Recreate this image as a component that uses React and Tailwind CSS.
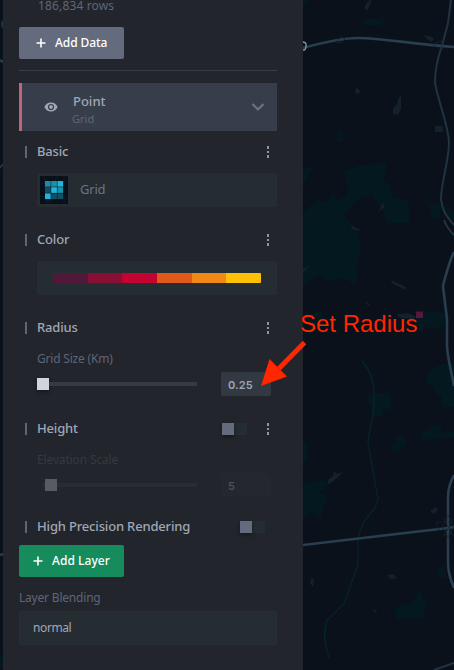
import React from "react";

function MapCanvas() {
  return (
    <svg className="absolute inset-0" width="454" height="670" viewBox="0 0 454 670">
      <rect width="454" height="670" fill="#0a111a" />
      <g fill="#04191f">
        <path d="M303 0h5l-5 7zM366 18l16 2V15h1v10h-21zM337 129l5 2 2 10h-7zM303 168h10l-10 17z" />
        <path d="M341 166l3 5 16-6 27-2-4 18 5 2 5 14 5 3-2-3 10 3 3 6v17h-22l-4-12-11-16-15 4-13 16 6 8h-15l-7-18 2-8 3-5 3 8 9-3 4-11zM303 220h45l10 13 3 13-4 17-1 7 2 5-3 10-13-8-12 5-12-7-8 6-9 8zM309 207l10-7 15 5 9 12 5 13-23 5-22-9v-12z" />
        <path d="M428 202l13 2-2 15-7-2zM444 205l10 7v8l-10-8zM402 220h7l-3 3zM310 315l12-6 1 15-14 12zM416 315l12-4 17 2v13l-10 2-10-1-4 4h-5z" />
        <path d="M427 372l16-8 11-2v45h-11l-2-12-6-1-2-8-7-2zM370 393h21v16h-8v7h-12v-11l-4-4zM421 432l8-2 6-6 6 3v7l13-3v6l-32 3zM396 437l8-2v6h-9zM392 443h5v-3h8v6l-6 1v4h-7z" />
        <path d="M303 443h4v15l-4 8zM303 485l17-5 11 3-13 10 9 3-6 21-11-5-7 6zM438 568l8-2v12h-6l-2-7zM396 608l7-4 8-1 5-5 3-8 4 5-1 5 5 3-1 5-3 3 1 7-28 1zM0 655h3v13H0z" />
      </g>
      <g fill="#14212b">
        <path d="M368 1l4-1-3 7-2 3h-2V6zM356 88l5 3-3 3-3-1zM398 99l3-4v14l-3 6-5-1v-6l4-4zM435 126h8v6h-8zM424 35l8 2 2 2-3 3-4-3zM381 205l3-2v5l-3 1-3 6z" />
        <path d="M351 225l9 5-1 1-7-2zM391 280l15 7-1 3-13-7zM365 301l5 4-2 1zM398 314l10-1 8 4-3 2-12-1-3-1zM303 269l7-4-7 8z" />
        <path d="M328 480l5-4 1-5 3 3 6-2-6 6-6 5-3 1zM431 510l5-3 2 3-4 4-3-2zM312 577l2 4-1 6-3-4zM387 575l6-1 4 4-6 1zM372 608l4 3 1 4z" />
      </g>
      <g fill="none" stroke="#05242a" strokeWidth="1.3">
        <path d="M362 361c9 10 13 23 12 38 1 18-4 23-6 43l6 35 4 22c-1 13-16 16-20 40v26l-14 39-17 16c-4 14-3 21 2 38" />
      </g>
      <g fill="none" stroke="#203341" strokeWidth="2">
        <path d="M451 0l-3 23-6 23c-5 13-7 25-7 37 4 21 13 42 14 59 0 19-8 41-8 57 1 10 4 16 13 26M444 220c2 6 5 10 10 15M434 670l20-7" />
        <path d="M3 21q-2 3 0 7M3 164l-3 4" />
      </g>
      <g fill="none" stroke="#293e4e" strokeWidth="2.6">
        <path d="M303 48c18-5 40-10 55-10 22 0 55 6 96 9M303 545l145-17 6-1" />
        <path d="M454 252c-4 8-8 22-11 34l4 33v26c0 10 3 20 7 41M454 475c-3 6-6 12-6 23v65c0 11 3 18 6 25" />
        <path d="M0 60l3 2M0 555l3-1" />
      </g>
      <g fill="none" stroke="#182530" strokeWidth="0.8">
        <path d="M336 42l5-5 4 2-4 4zM433 44l9-3v10zM448 515l-6 12 6 10 6-10zM442 522h-5v6l4 3M444 519l9 17M453 519l-9 17" />
      </g>
      <path d="M302 42q5 0 4 4 0 5-4 4" fill="none" stroke="#829fa9" strokeWidth="1.3" />
      <rect x="416" y="311.500" width="7" height="6.500" fill="#57173f" />
    </svg>
  );
}

function Dots() {
  return (
    <span className="flex w-[4px] flex-col items-center gap-[2px]">
      {[0, 1, 2].map((i) => (
        <span key={i} className="h-[2.5px] w-[2.5px] bg-[#8f95a2]" />
      ))}
    </span>
  );
}

function Heading({ children, className = "", toggle = false, dots = true }) {
  return (
    <div className={`flex items-center pl-[6px] ${className}`}>
      <span className="h-3 w-[2px] bg-[#5d6578]" />
      <span className="ml-[10px] flex-1 whitespace-nowrap text-[13px] font-medium tracking-[-0.17px] text-[#a0a7b4]">
        {children}
      </span>
      {toggle && <Toggle className={dots ? "mr-[19px]" : "mr-3"} />}
      {dots && (
        <span className="mr-[7px]">
          <Dots />
        </span>
      )}
    </div>
  );
}

function Toggle({ className = "" }) {
  return (
    <span className={`flex h-3 w-[25px] rounded-[1px] bg-[#242d33] ${className}`}>
      <span className="h-3 w-3 bg-[#636b7d] shadow-[0_2px_4px_rgba(0,0,0,0.4)]" />
    </span>
  );
}

function Plus() {
  return (
    <svg width="10" height="10" viewBox="0 0 10 10" className="shrink-0" stroke="currentColor" strokeWidth="1.6">
      <path d="M5 .5v9M.5 5h9" />
    </svg>
  );
}

function GridThumb() {
  const colors = ["#1b8ba7", "#1a91ad", "#20b4d7", "#124f60", "#20b5dc", "#1990ac", "#20b5dc", "#124f60", "#124f60"];
  return (
    <svg width="28" height="28" viewBox="0 0 28 28" className="shrink-0">
      <rect width="28" height="28" fill="#08101a" />
      <path d="M0 8L28 5M4 0l3 28M17 0l-2 5M0 20l28 3M24 0v28M10 23v5" stroke="#14202b" strokeWidth="0.7" />
      {colors.map((c, i) => (
        <rect key={i} x={5 + (i % 3) * 6.2} y={5 + Math.floor(i / 3) * 6.2} width="5.700" height="5.700" fill={c} />
      ))}
    </svg>
  );
}

export default function App() {
  return (
    <div className="relative h-[670px] w-[454px] overflow-hidden font-['Noto_Sans',sans-serif]">
      <MapCanvas />
      <aside className="relative ml-[3px] flex h-full w-[300px] flex-col bg-[#22252c] pl-4 pr-[26px]">
        <div className="h-3 whitespace-nowrap pl-[19px] text-[12px] leading-[12px] tracking-[0.15px] text-[#5e6678]">
          186,834 rows
        </div>
        <button className="mt-[15px] flex h-8 w-[105px] items-center rounded-[2px] bg-[#636b7c] pl-[17px] text-[12px] font-medium text-white">
          <Plus />
          <span className="ml-[9px] whitespace-nowrap tracking-[-0.08px]">Add Data</span>
        </button>
        <div className="mt-[11px] h-px bg-[#363b45]" />
        <div className="mt-3 flex h-12 items-center border-l-[3px] border-[#c0657b] bg-[#373d4a] pl-[22px] pr-3">
          <svg width="14" height="10" viewBox="0 0 14 10" className="shrink-0">
            <path fillRule="evenodd" fill="#a0a7b4" d="M7 .5C3.800.5 1.400 2.300.4 5 1.400 7.700 3.800 9.500 7 9.500S12.600 7.700 13.600 5C12.600 2.300 10.200.5 7 .5zM7 8.100A3.100 3.100 0 1 1 7 1.900a3.100 3.100 0 0 1 0 6.200zM7 3.100a1.900 1.900 0 1 0 0 3.800 1.900 1.900 0 0 0 0-3.800z" />
          </svg>
          <div className="ml-[14px] flex flex-1 flex-col pt-[5px]">
            <span className="pl-px text-[13px] font-medium leading-[18px] text-[#a0a7b4]">Point</span>
            <span className="text-[11px] leading-[17px] text-[#5e6678]">Grid</span>
          </div>
          <svg width="14" height="10" viewBox="0 0 14 10" fill="none" stroke="#6a7485" strokeWidth="2.200">
            <path d="M1.500 2L7 7.500 12.500 2" />
          </svg>
        </div>

        <Heading className="h-[42px]">Basic</Heading>
        <div className="ml-[18px] flex h-[34px] items-center rounded-[2px] bg-[#252d33] pl-[3px]">
          <GridThumb />
          <span className="ml-3 text-[13px] tracking-[-0.2px] text-[#6a7485]">Grid</span>
        </div>

        <Heading className="mt-3 h-[42px]">Color</Heading>
        <div className="ml-[18px] flex h-[34px] items-center rounded-[2px] bg-[#252d33] px-4">
          <div className="grid h-[10px] flex-1 grid-cols-6 overflow-hidden rounded-[1px]">
            <span className="bg-[#501839]" />
            <span className="bg-[#871034]" />
            <span className="bg-[#c30432]" />
            <span className="bg-[#e0591b]" />
            <span className="bg-[#f08815]" />
            <span className="bg-[#fec005]" />
          </div>
        </div>

        <Heading className="mt-3 h-[42px]">Radius</Heading>
        <div className="flex h-5 items-center pl-[18px] text-[12px] tracking-[-0.2px] text-[#5e6678]">Grid Size (Km)</div>
        <div className="mt-[3px] flex h-6 items-center pl-[18px]">
          <span className="h-3 w-3 bg-[#d0d4dd] shadow-[0_2px_4px_rgba(0,0,0,0.4)]" />
          <span className="h-1 w-[148px] bg-[#343b43]" />
          <span className="ml-6 flex h-6 w-[50px] items-center rounded-[2px] bg-[#323942] pl-[7px] pt-[2px] font-['Inter',sans-serif] text-[11px] font-semibold tracking-[0.15px] text-[#a0a7b4]">
            0.25
          </span>
        </div>

        <Heading className="mt-3 h-[42px]" toggle>Height</Heading>
        <div className="flex h-5 items-center pl-[18px] text-[12px] tracking-[-0.14px] text-[#343942]">Elevation Scale</div>
        <div className="mt-[3px] flex h-6 items-center pl-6">
          <span className="h-1 w-[2px] bg-[#292c33]" />
          <span className="h-3 w-3 bg-[#575b63]" />
          <span className="h-1 w-[140px] bg-[#292c33]" />
          <span className="ml-6 flex h-6 w-[50px] items-center rounded-[2px] bg-[#24272e] pl-[7px] pt-[2px] font-['Inter',sans-serif] text-[11px] font-semibold text-[#4b5059]">
            5
          </span>
        </div>

        <Heading className="mt-[11px] h-[37px]" toggle dots={false}>High Precision Rendering</Heading>
        <button className="flex h-8 w-[105px] items-center rounded-[2px] bg-[#168b5b] pl-[14px] text-[12px] font-medium text-white">
          <Plus />
          <span className="ml-[9px] whitespace-nowrap tracking-[0.05px]">Add Layer</span>
        </button>
        <div className="mt-[11px] flex h-5 items-center text-[12px] tracking-[-0.2px] text-[#5e6678]">Layer Blending</div>
        <div className="mt-[3px] flex h-[34px] items-center rounded-[2px] bg-[#252d33] pl-[14px] text-[12px] tracking-[-0.4px] text-[#a0a7b4]">
          normal
        </div>
      </aside>

      <svg className="absolute inset-0" width="454" height="670" viewBox="0 0 454 670">
        <path d="M304.500 342.500L279 368.500" stroke="#ff2600" strokeWidth="5" />
        <path d="M261 386l8.500-27L287 376.500z" fill="#ff2600" />
      </svg>
      <span className="absolute left-[300px] top-[309px] whitespace-nowrap font-['Liberation_Sans',sans-serif] text-[24px] leading-[30px] text-[#ff2600]">
        Set Radius
      </span>
    </div>
  );
}
